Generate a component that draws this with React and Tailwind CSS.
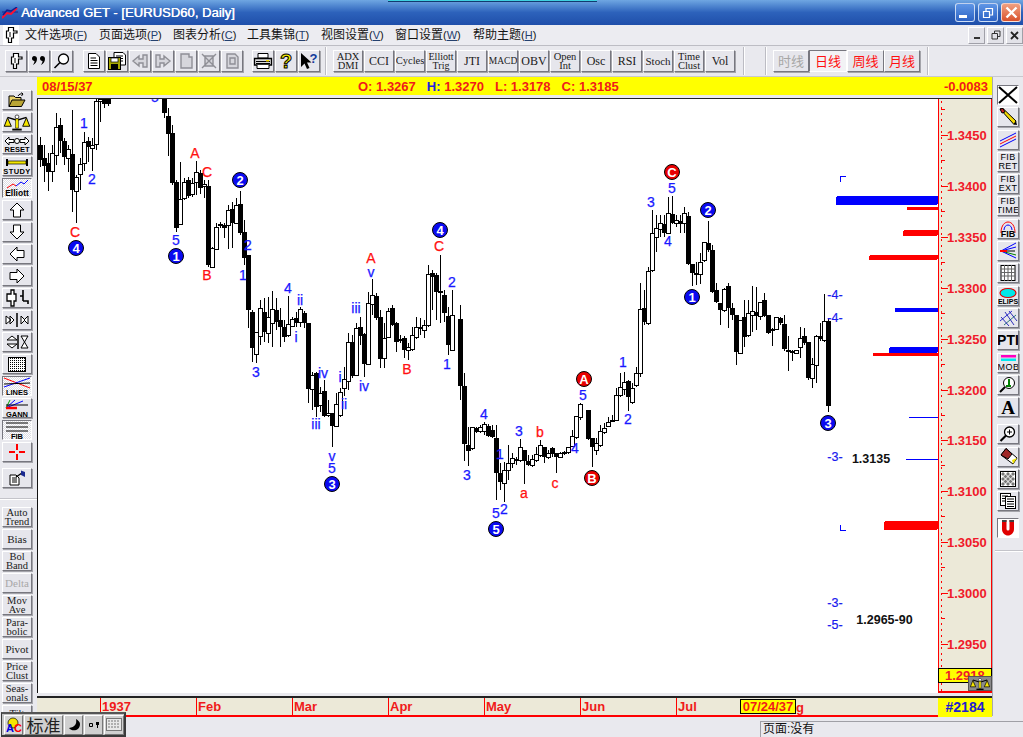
import React from "react";

const num = (x0, y0, list) =>
  list.map(([z, hi, top, bot, lo, f]) => {
    const raw = x0 + z / 3;
    const x = 40 + 4 * Math.round((raw - 40) / 4);
    return { x, hi: y0 + hi / 3, top: y0 + top / 3, bot: y0 + bot / 3, lo: y0 + lo / 3, f };
  });

const candles = [
  ...num(38, 95, [
    [6,125,150,195,215,1],[18,150,190,212,262,1],[30,175,205,232,288,1],[42,150,175,230,262,0],
    [54,55,95,180,210,0],[66,70,90,138,175,1],[78,130,138,185,210,1],[90,150,162,188,230,0],
    [102,45,178,285,350,1],[114,240,245,287,385,0],[126,190,208,238,285,0],[138,110,142,205,228,0],
    [150,125,138,155,200,1],[162,130,150,158,228,0],[174,10,18,148,165,0],[186,10,12,18,80,0],
    [198,0,0,28,40,1],[210,0,0,28,32,1],
    [378,0,5,55,70,1],[390,40,63,118,182,1],[402,90,115,265,270,1],[414,255,262,398,410,1],
    [426,200,312,388,390,0],[438,250,262,310,315,0],[450,245,255,302,310,1],[462,250,265,298,305,0],
    [474,198,232,262,300,0],[486,225,235,280,298,1],[498,255,268,275,310,0],[510,255,272,510,515,1],
    [522,455,458,515,518,0],[534,385,397,462,465,0],[546,380,388,392,400,1],[558,385,390,398,430,1],
    [570,330,346,390,462,0],[582,320,342,385,460,1],[594,310,330,385,388,0],[606,288,328,415,420,1],
    [618,375,412,488,510,1],
  ]),
  ...num(240, 220, [
    [24,105,105,270,325,1],[37,270,277,385,425,1],[49,335,335,400,430,0],[61,240,265,350,375,0],
    [73,235,277,335,365,1],[85,232,292,340,370,0],[97,212,268,310,380,0],[109,235,270,305,330,1],
    [121,265,300,322,380,1],[133,300,320,350,365,1],[145,228,313,347,352,0],[157,290,298,320,322,0],
    [169,275,295,310,320,1],[181,262,268,308,320,0],[193,272,278,308,325,1],[205,310,310,508,550,1],
    [217,455,465,507,570,0],[229,455,458,562,590,1],[241,500,518,555,575,0],[253,480,514,588,590,1],
    [265,540,578,585,590,0],[277,580,580,618,680,1],[289,520,553,620,622,0],[301,505,515,585,590,0],
    [313,440,478,505,528,0],[325,340,365,482,510,0],[337,345,367,467,475,1],[349,310,325,465,468,0],
    [361,290,322,347,375,1],[373,340,342,432,470,1],[385,215,250,434,436,0],[397,178,224,252,285,0],
    [409,220,228,295,300,1],[421,270,292,418,445,1],[433,310,355,415,445,0],[445,265,273,350,355,0],
    [457,255,265,314,318,1],[469,305,310,367,395,1],[481,345,358,362,370,0],[493,348,355,390,415,1],
    [505,368,382,390,420,0],[517,320,346,388,392,0],[529,290,320,350,358,0],[541,295,322,328,345,1],
    [553,300,314,328,355,0],[565,135,162,315,320,0],[577,150,158,170,270,1],[589,160,165,215,300,1],
    [601,105,212,218,308,1],[613,210,225,278,305,1],[625,260,287,375,405,1],[637,210,285,390,392,0],
    [661,255,297,497,540,1],[673,460,497,672,722,1],[685,620,675,692,738,1],[697,620,622,685,690,0],
    [709,622,625,635,640,1],[721,615,622,635,640,0],[733,605,613,635,645,0],[745,612,618,648,652,1],
    [757,615,630,652,655,1],[769,615,655,760,840,1],
  ]),
  ...num(440, 340, [
    [181,370,398,425,450,1],[193,365,390,428,485,0],[205,315,368,390,420,0],[217,340,355,370,385,0],
    [229,350,358,362,375,1],[241,298,322,360,365,0],[253,330,330,362,432,1],[265,345,362,375,378,1],
    [277,345,358,376,380,0],[289,320,343,360,365,0],[301,300,315,345,350,0],[313,320,322,350,370,1],
    [325,330,340,352,358,0],[337,322,325,342,350,1],[349,338,340,352,400,1],[361,335,338,350,352,0],
    [373,332,335,338,345,0],[385,320,322,338,342,0],[397,270,287,317,320,0],[409,228,228,292,296,0],
    [421,190,192,232,240,0],[445,210,210,298,300,1],[457,295,295,320,380,1],[469,295,310,332,345,0],
    [481,255,273,315,320,0],[493,250,265,278,282,0],[505,230,247,260,262,0],[517,225,240,242,245,0],
    [529,145,165,240,243,0],[541,100,142,165,170,0],[553,95,125,145,165,0],[565,120,122,172,212,1],
    [577,130,145,188,192,0],
  ]),
  ...num(620, 150, [
    [48,650,668,705,710,0],[60,400,478,670,680,0],[72,420,475,515,525,1],[84,350,363,520,525,0],
    [96,180,250,362,365,0],[108,195,235,262,305,0],[120,195,220,238,262,0],[132,195,223,250,260,1],
    [144,140,190,250,252,0],[156,138,192,218,222,1],[168,195,210,220,232,0],[180,195,212,222,250,1],
    [192,172,190,220,250,0],[204,185,198,342,345,1],[216,345,342,370,408,1],[228,335,368,370,405,1],
    [240,308,335,370,402,0],[252,275,277,332,335,0],[264,212,280,300,305,1],[276,285,300,425,430,1],
    [288,400,420,455,460,1],[300,458,460,480,525,1],[312,415,418,480,485,0],[324,400,408,475,535,1],
    [336,460,475,495,510,1],[348,510,495,605,645,1],[360,510,510,608,610,0],[372,450,502,560,590,1],
    [384,450,490,557,560,0],[396,408,483,495,545,0],[408,410,487,498,540,1],[420,455,455,498,510,0],
    [432,430,450,498,500,1],[444,495,495,548,552,1],[456,535,537,540,588,0],[468,500,502,538,540,0],
    [480,500,505,520,525,1],[492,495,523,598,602,1],[504,558,600,602,662,0],[516,600,603,610,632,1],
    [528,600,600,608,612,0],[540,530,565,592,625,0],[552,535,558,580,585,1],[564,575,577,683,690,1],
    [576,625,643,685,715,0],[588,555,557,645,700,0],[600,520,558,568,572,1],[612,432,512,568,575,0],
    [624,505,513,768,785,1],
  ]),
];

const BLUE = "#1818ff";
const RED = "#ff1010";
const labels = [
  ["5",155,97,BLUE],["1",84,123,BLUE],["2",92,179,BLUE],["C",75,232,RED],["A",195,153,RED],["C",207,172,RED],["5",176,240,BLUE],
  ["B",207,275,RED],["2",248,245,BLUE],["1",243,275,BLUE],["4",288,288,BLUE],["ii",300,300,BLUE],["i",296,337,BLUE],
  ["3",256,372,BLUE],["iv",323,373,BLUE],["iii",316,424,BLUE],["i",340,377,BLUE],["ii",344,404,BLUE],["iii",356,308,BLUE],
  ["iv",364,386,BLUE],["A",371,258,RED],["v",371,272,BLUE],["C",439,246,RED],["2",452,282,BLUE],["1",447,364,BLUE],
  ["B",407,369,RED],["v",332,456,BLUE],["5",332,468,BLUE],["3",467,475,BLUE],["4",484,414,BLUE],["1",500,454,BLUE],
  ["3",519,431,BLUE],["a",524,493,RED],["b",540,432,RED],["c",555,483,RED],["5",496,513,BLUE],["2",504,509,BLUE],
  ["4",575,448,BLUE],["5",583,395,BLUE],["1",623,362,BLUE],["2",628,419,BLUE],["5",672,188,BLUE],["3",651,202,BLUE],
  ["4",668,241,BLUE],
];
const circles = [
  ["4",76,248,0],["2",240,180,0],["1",176,256,0],["4",440,230,0],["3",332,484,0],["5",496,529,0],["A",584,379,1],
  ["B",592,478,1],["C",672,172,1],["2",708,210,0],["1",692,297,0],["3",828,423,0],
];
const bars = [
  [836,196,102,9,"#0000ff"],[907,207,31,3,"#ff0000"],[903,230,35,6,"#ff0000"],[869,255,69,5,"#ff0000"],
  [895,308,43,4,"#0000ff"],[889,347,49,6,"#0000ff"],[873,353,65,3,"#ff0000"],[884,521,54,9,"#ff0000"],
];

function Chart() {
  return (
    <svg viewBox="38 99 900 594" className="w-[900px] h-[594px] block" shapeRendering="crispEdges">
      {candles.map((c, i) => (
        <g key={i}>
          <rect x={c.x} y={c.hi} width="1" height={Math.max(c.lo - c.hi, 1)} fill="#000" />
          {c.f ? (
            <rect x={c.x - 2} y={c.top} width="5" height={Math.max(c.bot - c.top, 2)} fill="#000" />
          ) : (
            <rect x={c.x - 1.5} y={Math.round(c.top) + 0.5} width="4" height={Math.max(Math.round(c.bot - c.top), 1)} fill="#fff" stroke="#000" strokeWidth="1" />
          )}
        </g>
      ))}
      {bars.map(([x, y, w, h, col], i) => (
        <rect key={i} x={x} y={y} width={w} height={h} rx={h > 4 ? 2 : 1} fill={col} />
      ))}
      <path d="M840.5 182V176.5H846M840.5 525V530.5H846" fill="none" stroke="#0000ff" />
      <rect x="909" y="417" width="29" height="1" fill="#0000ff" />
      <rect x="906" y="459" width="32" height="1" fill="#0000ff" />
      <g fontFamily="'Liberation Sans',sans-serif" fontSize="14" textAnchor="middle" dominantBaseline="central" shapeRendering="auto">
        {labels.map(([t, x, y, col], i) => (
          <text key={i} x={x} y={y} fill={col} stroke={col} strokeWidth="0.25">{t}</text>
        ))}
        {circles.map(([t, x, y, r], i) => (
          <g key={i}>
            <circle cx={x} cy={y} r="7.5" fill={r ? "#e80000" : "#0a0af0"} stroke="#000" strokeWidth="1" />
            <text x={x} y={y + 0.5} fill="#fff" fontWeight="700" fontSize="13">{t}</text>
          </g>
        ))}
        {[["-4-",835,295],["-4-",835,318],["-3-",835,457],["-3-",835,603],["-5-",835,625]].map(([t, x, y], i) => (
          <text key={i} x={x} y={y} fill="#1818ee" fontSize="12.5" stroke="#1818ee" strokeWidth="0.2">{t}</text>
        ))}
        <text x="871" y="459" fill="#111" fontWeight="700" fontSize="12.5">1.3135</text>
        <text x="884.5" y="620" fill="#111" fontWeight="700" fontSize="12.5">1.2965-90</text>
      </g>
    </svg>
  );
}

const ticks = [
  ["1.3450",135],["1.3400",186],["1.3350",237],["1.3300",288],["1.3250",339],["1.3200",390],
  ["1.3150",440],["1.3100",491],["1.3050",542],["1.3000",593],["1.2950",644],
];

function Scale({ w = 20, h = 14 }) {
  return (
    <svg width={w} height={h} viewBox="0 0 28 18">
      <path d="M4 3.5L14 6.5L24 3.5" stroke="#000" strokeWidth="1.5" fill="none" />
      <path d="M4 4L0.5 13H8ZM24 4L20 13H27.5Z" fill="#f5e500" stroke="#000" />
      <path d="M12.5 5H15.5V15H12.5Z" fill="#fff200" stroke="#000" strokeWidth="0.6" />
      <path d="M9 16.5H19" stroke="#000" strokeWidth="2" />
      <circle cx="14" cy="3" r="2" fill="#fff" stroke="#000" strokeWidth="0.7" />
    </svg>
  );
}

function Axis() {
  return (
    <div className="relative w-[54px] h-[594px] bg-[#ece9d8] border-l border-r border-[#ff0000] border-b-2 border-b-[#ff0000]">
      <svg viewBox="938 99 54 594" className="absolute left-[-1px] top-0 w-[54px] h-[594px]" shapeRendering="crispEdges">
        {Array.from({ length: 100 }).map((_, i) => (
          <rect key={i} x="941" y={101 + i * 6} width="1" height="2" fill="#ff0000" />
        ))}
        {ticks.map(([t, y]) => (
          <g key={t}>
            <rect x="941" y={y} width="7" height="1" fill="#ff0000" />
            <rect x="941" y={y + 25} width="4" height="1" fill="#ff0000" />
          </g>
        ))}
        <rect x="941" y="109" width="4" height="1" fill="#ff0000" />
        <g shapeRendering="auto" fontFamily="'Liberation Sans',sans-serif" fontSize="13" fontWeight="700" fill="#f01a2a" dominantBaseline="central">
          {ticks.map(([t, y]) => (
            <text key={t} x="947" y={y + 0.5}>{t}</text>
          ))}
        </g>
      </svg>
      <div className="absolute left-[-1px] right-[-1px] top-[569px] h-[15px] bg-[#ffff00] border border-black text-[#f01a2a] text-[13px] font-bold leading-[13px] pl-[6px] overflow-hidden font-['Liberation_Sans',sans-serif]">
        1.2918
      </div>
      <div className="absolute right-[-1px] top-[577px] w-[24px] h-[15px] bg-[#8a8a8a] border border-[#555] flex items-center justify-center">
        <Scale />
      </div>
    </div>
  );
}

const raised = "border border-t-white border-l-white border-r-[#77777f] border-b-[#77777f] shadow-[1px_1px_0_#a4a4aa] bg-[#e6e6ec]";
const pressed = "border border-t-[#77777f] border-l-[#77777f] border-r-white border-b-white bg-[#f2f2f5]";
const textBtn = "font-['Liberation_Serif',serif] text-[#1a1a1a] text-center";

function Btn({ w = 22, h = 20, on, className = "", children }) {
  return (
    <div
      className={`${on ? pressed : raised} flex items-center justify-center shrink-0 overflow-hidden ${className}`}
      style={{ width: w, height: h }}
    >
      {children}
    </div>
  );
}

const s = { fill: "none", stroke: "#000", strokeWidth: 1 };
const Svg = ({ w = 20, h = 18, vb, children }) => (
  <svg width={w} height={h} viewBox={vb || `0 0 ${w} ${h}`} className="block">{children}</svg>
);

const CandleIcon = ({ light }) => (
  <Svg w={16} h={18}>
    <path d="M8.5 1.5H5.5V5H3.5V12H5.5V16.5H8.5V12H10.5V7H14V5H10.5V1.5Z" fill="#fff" stroke="#000" strokeWidth="1.2" />
    <path d="M7 6V11" stroke={light ? "#999" : "#000"} />
  </Svg>
);
const QuoteIcon = () => (
  <Svg w={16} h={14}>
    <path d="M3 2C5 2 6 3 6 5C6 8 4 10 2 11C3 9 3.5 8 3.5 7C2 7 1 6 1 4.5C1 3 2 2 3 2ZM11 2C13 2 14 3 14 5C14 8 12 10 10 11C11 9 11.5 8 11.5 7C10 7 9 6 9 4.5C9 3 10 2 11 2Z" fill="#000" />
  </Svg>
);
const Magnifier = ({ plus }) => (
  <Svg w={18} h={18}>
    <circle cx="10.5" cy="7" r="5" fill="#fff" stroke="#000" strokeWidth="1.3" />
    <path d="M7 10.5L1.5 16" stroke="#000" strokeWidth={plus ? 2.2 : 1.6} />
    {plus && <path d="M8 7H13M10.5 4.5V9.5" stroke="#000" />}
  </Svg>
);
const Doc = () => (
  <Svg w={14} h={16}>
    <path d="M1.5 0.5H9L12.5 4V15.5H1.5Z" fill="#fff" stroke="#000" />
    <path d="M3.5 5H9M3.5 7.5H10.5M3.5 10H10.5M3.5 12.5H10.5" stroke="#000" />
  </Svg>
);
const Save = () => (
  <Svg w={18} h={18}>
    <path d="M6 0.5H15L17.5 3V13H6Z" fill="#fff" stroke="#000" />
    <path d="M8 4H15M8 6.5H15M8 9H15" stroke="#000" />
    <rect x="0.5" y="5.5" width="12" height="12" fill="#a8a800" stroke="#000" />
    <rect x="3" y="6" width="7" height="4" fill="#fff" stroke="#000" strokeWidth="0.7" />
    <rect x="3" y="12" width="7" height="5" fill="#000" />
  </Svg>
);
const GrayShape = ({ d }) => (
  <Svg w={18} h={16}>
    <path d={d} fill="#d6d6dc" stroke="#8f8f96" strokeWidth="1.4" />
  </Svg>
);
const Printer = () => (
  <Svg w={20} h={18}>
    <path d="M5 1.5H15V6H5Z" fill="#fff" stroke="#000" />
    <path d="M1.5 6.5H18.5V13H1.5Z" fill="#d9d9d9" stroke="#000" strokeWidth="1.3" />
    <path d="M3 9.5H17M3 11.5H17" stroke="#000" />
    <path d="M4 13V16.5H16V13" fill="#fff" stroke="#000" />
    <rect x="13" y="8" width="3" height="1.5" fill="#ffe000" />
  </Svg>
);
const Help = () => (
  <span className="font-['Liberation_Sans',sans-serif] font-bold text-[20px] leading-none text-[#f5ea00] [-webkit-text-stroke:1px_#000]">?</span>
);
const HelpArrow = () => (
  <Svg w={20} h={18}>
    <path d="M2 1V15L5.5 11.5L8 17L10.5 16L8 10.5H12.5Z" fill="#000" />
    <text x="10.5" y="11" fontFamily="'Liberation Sans',sans-serif" fontWeight="700" fontSize="13" fill="#123a9c">?</text>
  </Svg>
);

const FolderI = () => (
  <Svg w={18} h={16}>
    <path d="M1 4H6L7.5 5.5H13V14.5H1Z" fill="#e9d36a" stroke="#000" />
    <path d="M1 14.5L4 8H17L13.5 14.5Z" fill="#b9a534" stroke="#000" />
    <path d="M10 4C11 2 13 1.5 15 2L13.5 0.5M15 2L13.5 4" stroke="#000" fill="none" />
  </Svg>
);
const ResetI = () => (
  <Svg w={28} h={18}>
    <path d="M2 6L6 2V4.5H11V7.5H6V10ZM26 6L22 2V4.5H17V7.5H22V10Z" fill="#fff" stroke="#000" />
    <circle cx="14" cy="6" r="2.5" fill="#fff" stroke="#000" />
    <text x="14" y="17" textAnchor="middle" fontFamily="'Liberation Sans',sans-serif" fontWeight="700" fontSize="7.5">RESET</text>
  </Svg>
);
const StudyI = () => (
  <Svg w={28} h={18}>
    <path d="M4 2V9M24 2V9" stroke="#000" strokeWidth="2" />
    <rect x="5" y="4" width="18" height="3" fill="#f3e600" stroke="#000" strokeWidth="0.7" />
    <text x="14" y="17" textAnchor="middle" fontFamily="'Liberation Sans',sans-serif" fontWeight="700" fontSize="7.5" letterSpacing="0.4">STUDY</text>
  </Svg>
);
const ElliottI = () => (
  <Svg w={28} h={18}>
    <path d="M4 9L10 5L13 7" stroke="#ff0000" fill="none" />
    <path d="M13 7L18 3L21 5L25 1" stroke="#0000ff" fill="none" />
    <text x="14" y="17" textAnchor="middle" fontFamily="'Liberation Sans',sans-serif" fontWeight="700" fontSize="8.5">Elliott</text>
  </Svg>
);
const Arrow = ({ dir }) => {
  const rot = { up: 0, down: 180, left: 270, right: 90 }[dir];
  return (
    <Svg w={18} h={16}>
      <path transform={`rotate(${rot} 9 8)`} d="M9 1L16 8H12.5V15H5.5V8H2Z" fill="#fff" stroke="#000" />
    </Svg>
  );
};
const TwoCandles = () => (
  <Svg w={26} h={18}>
    <path d="M7 1H10V5H12V12H10V17H7V12H3V5H7Z" fill="#fff" stroke="#000" strokeWidth="1.3" />
    <path d="M19 1V12M19 7H16M19 12H24V15" stroke="#000" strokeWidth="1.6" fill="none" />
  </Svg>
);
const HBars = () => (
  <Svg w={26} h={16}>
    <path d="M7 8L2 4V12ZM10 8L6 4V12Z" fill="#fff" stroke="#000" />
    <path d="M13 1V15" stroke="#000" strokeWidth="1.5" />
    <path d="M17 4L21 8L17 12ZM24 4L20 8L24 12Z" fill="#fff" stroke="#000" />
  </Svg>
);
const VBars = () => (
  <Svg w={26} h={16}>
    <path d="M3 6L8 2L13 6ZM3 10L8 14L13 10Z" fill="#fff" stroke="#000" />
    <path d="M14 1V15" stroke="#000" strokeWidth="1.5" />
    <path d="M17 2H24L20.5 8L24 14H17L20.5 8Z" fill="#fff" stroke="#000" />
  </Svg>
);
const Dots = () => (
  <Svg w={18} h={15}>
    <rect width="18" height="15" fill="#fff" />
    {Array.from({ length: 7 }).map((_, r) =>
      Array.from({ length: 9 }).map((_, c) => (
        <rect key={`${r}-${c}`} x={c * 2} y={r * 2 + 1} width="1" height="1" fill="#000" />
      ))
    )}
    <rect x="0.5" y="0.5" width="17" height="14" fill="none" stroke="#000" />
  </Svg>
);
const LinesI = () => (
  <Svg w={28} h={18}>
    <path d="M1 1L27 11" stroke="#ff0000" />
    <path d="M1 10L27 1" stroke="#0000ff" />
    <path d="M1 7L27 6" stroke="#000" />
    <text x="14" y="17.5" textAnchor="middle" fontFamily="'Liberation Sans',sans-serif" fontWeight="700" fontSize="7.5">LINES</text>
  </Svg>
);
const GannI = () => (
  <Svg w={28} h={18}>
    <path d="M3 9L12 1M3 9L20 2" stroke="#0000ff" />
    <path d="M3 9L7 1" stroke="#00a000" />
    <path d="M3 9L14 9" stroke="#ff0000" strokeWidth="2.5" />
    <path d="M3 6L25 6" stroke="#000" />
    <text x="14" y="17.5" textAnchor="middle" fontFamily="'Liberation Sans',sans-serif" fontWeight="700" fontSize="7.5">GANN</text>
  </Svg>
);
const FibI = () => (
  <Svg w={28} h={18}>
    <path d="M3 2H25M3 6H25M3 10H25" stroke="#000" />
    <text x="14" y="17.5" textAnchor="middle" fontFamily="'Liberation Sans',sans-serif" fontWeight="700" fontSize="7.5">FIB</text>
  </Svg>
);
const Cross = () => (
  <Svg w={16} h={16}>
    <path d="M8 0V6M8 10V16M0 8H6M10 8H16" stroke="#ff0000" strokeWidth="2" />
  </Svg>
);
const ClipI = () => (
  <Svg w={18} h={16}>
    <path d="M2 5H8L11 8V15H2Z" fill="#fff" stroke="#000" />
    <path d="M4 8H9M4 10H9M4 12H9" stroke="#000" />
    <path d="M8 7L14 3" stroke="#000" strokeWidth="1.3" />
    <path d="M13 0.5L17 2V7L13 5Z" fill="#1a2a90" />
  </Svg>
);
const Pencil = () => (
  <Svg w={20} h={18}>
    <path d="M2 1L5 0.5L18 13L16 16.5Z" fill="#f3d800" stroke="#000" />
    <path d="M16 16.5L19 17L18 13Z" fill="#000" />
    <path d="M2 1L5 0.5L7 4L4 5Z" fill="#d02020" stroke="#000" />
  </Svg>
);
const TriLines = () => (
  <Svg w={20} h={18}>
    <path d="M2 10L18 2" stroke="#0000ff" />
    <path d="M2 13L18 5" stroke="#ff0000" />
    <path d="M2 16L18 8" stroke="#0000ff" />
  </Svg>
);
const FibTxt = ({ a, b }) => (
  <div className="font-['Liberation_Sans',sans-serif] text-[9px] leading-[9px] tracking-[0.4px] text-center text-black">
    {a}<br />{b}
  </div>
);
const FibArc = () => (
  <Svg w={20} h={18}>
    <path d="M3 13C3 5 7 2 10 2C14 2 17 6 17 13" stroke="#ff0000" fill="none" />
    <path d="M6 10C6 7 8 5 10 5C12 5 14 7 14 10" stroke="#0000ff" fill="none" />
    <text x="10" y="17" textAnchor="middle" fontFamily="'Liberation Sans',sans-serif" fontWeight="700" fontSize="9">FIB</text>
  </Svg>
);
const Fan = () => (
  <Svg w={20} h={18}>
    <path d="M3 9L18 1M3 9L18 5" stroke="#0000ff" />
    <path d="M3 9L17 9" stroke="#000" />
    <path d="M3 9L18 13" stroke="#008000" />
    <path d="M3 9L18 16" stroke="#0000ff" />
    <path d="M2 9H9" stroke="#ff0000" strokeWidth="2" />
  </Svg>
);
const Grid = () => (
  <Svg w={18} h={16}>
    <rect x="2" y="0.5" width="14" height="15" fill="#fff" stroke="#000" />
    <path d="M2 4H16M2 7.5H16M2 11H16M5.5 0V16M9 0V16M12.5 0V16" stroke="#666" />
  </Svg>
);
const Elips = () => (
  <Svg w={20} h={18}>
    <ellipse cx="10" cy="6" rx="8" ry="4.5" fill="#00e8e8" stroke="#e00000" strokeWidth="1.2" />
    <text x="10" y="17" textAnchor="middle" fontFamily="'Liberation Sans',sans-serif" fontWeight="700" fontSize="7">ELIPS</text>
  </Svg>
);
const Diag = () => (
  <Svg w={20} h={18}>
    <path d="M2 12L14 2" stroke="#0000cc" strokeWidth="0.8" />
    <path d="M6 16L18 6" stroke="#006060" strokeWidth="0.8" />
    <path d="M7 3L16 16M11 2L19 12M3 8L11 17" stroke="#0000aa" strokeWidth="0.8" />
  </Svg>
);
const Mob = () => (
  <Svg w={20} h={18}>
    <rect x="3" y="1" width="15" height="2.5" fill="#ff00c0" />
    <rect x="3" y="4.5" width="15" height="2.5" fill="#00e8f0" />
    <text x="10.5" y="16" textAnchor="middle" fontFamily="'Liberation Sans',sans-serif" fontSize="9" letterSpacing="0.5">MOB</text>
  </Svg>
);
const Tool = () => (
  <Svg w={18} h={18}>
    <circle cx="10" cy="7" r="5.5" fill="#fff" stroke="#000" />
    <path d="M6 11L1 16" stroke="#000" strokeWidth="2" />
    <path d="M10 3V10M7 10H12" stroke="#008000" strokeWidth="2" />
  </Svg>
);
const Eraser = () => (
  <Svg w={20} h={18}>
    <path d="M8 0.5L19 10L15 16L3 7Z" fill="#fff" stroke="#000" />
    <path d="M8 0.5L14 6L10 11L3 7Z" fill="#a02828" stroke="#000" />
    <path d="M14 12L19 10L15 16Z" fill="#f3e600" />
  </Svg>
);
const Sparse = () => (
  <Svg w={16} h={16}>
    <rect x="0.5" y="0.5" width="15" height="15" fill="#fff" stroke="#000" />
    {[[3,3],[8,3],[13,3],[5.5,5.5],[10.5,5.5],[3,8],[8,8],[13,8],[5.5,10.5],[10.5,10.5],[3,13],[8,13],[13,13]].map(([x, y]) => (
      <path key={`${x}-${y}`} d={`M${x} ${y - 2}L${x + 2} ${y}L${x} ${y + 2}L${x - 2} ${y}Z`} fill="#777" />
    ))}
  </Svg>
);
const PagesI = () => (
  <Svg w={18} h={16}>
    <rect x="1.5" y="0.5" width="10" height="12" fill="#fff" stroke="#000" />
    <rect x="6.5" y="3.5" width="10" height="12" fill="#fff" stroke="#000" />
    <path d="M3 3H9M3 5.5H6M3 8H6M8 6H15M8 8.5H15M8 11H15M8 13.5H15" stroke="#000" />
  </Svg>
);
const Magnet = () => (
  <Svg w={18} h={18}>
    <path d="M3 1H7.5V10A1.5 1.5 0 0 0 10.5 10V1H15V10C15 14 12 16.5 9 16.5C6 16.5 3 14 3 10Z" fill="#e00000" />
    <path d="M3 1H7.5V3H3ZM10.5 1H15V3H10.5Z" fill="#404040" />
  </Svg>
);
const BigX = () => (
  <Svg w={20} h={18}>
    <path d="M1 1L19 17M19 1L1 17" stroke="#000" strokeWidth="2" />
  </Svg>
);

const Two = ({ a, b, size = "text-[10.5px]" }) => (
  <div className={`${textBtn} ${size} leading-[9px]`}>
    {a}
    <br />
    {b}
  </div>
);
const One = ({ t, size = "text-[12px]", muted }) => (
  <div className={`${textBtn} ${size} ${muted ? "text-[#a8a8a8]" : ""}`}>{t}</div>
);

function TitleBar() {
  const WinBtn = ({ red, children }) => (
    <div className={`w-[20px] h-[19px] rounded-[3px] border border-white/70 flex items-center justify-center ${red ? "bg-gradient-to-b from-[#f0a080] to-[#d8502a]" : "bg-gradient-to-b from-[#5f96e6] to-[#2c62c4]"}`}>
      {children}
    </div>
  );
  return (
    <div className="h-[25px] shrink-0 relative flex items-center bg-gradient-to-b from-[#6fa6e2] via-[#2d62bb] to-[#1f4faa] pl-[2px] pr-[2px]">
      <svg width="16" height="12" viewBox="0 0 16 12" className="mr-[3px] shrink-0">
        <path d="M0 5H16" stroke="#1a2a8a" strokeWidth="1" />
        <path d="M0 11L5 6L9 7L15 1" stroke="#ff1030" strokeWidth="2" fill="none" />
        <path d="M1 8L5 3L9 4L15 0" stroke="#102090" strokeWidth="1.5" fill="none" />
      </svg>
      <span className="text-white font-['Liberation_Sans',sans-serif] text-[13px] tracking-[0.05px] [text-shadow:0.4px_0_0_#fff]">
        Advanced GET - [EURUSD60, Daily]
      </span>
      <div className="absolute left-[388px] top-0 w-[209px] h-[2px] bg-[#3fd0e0] border-b border-[#123a70]" />
      <div className="ml-auto flex gap-[3px]">
        <WinBtn><div className="w-[8px] h-[3px] bg-white mt-[8px] mr-[4px]" /></WinBtn>
        <WinBtn>
          <svg width="12" height="12" viewBox="0 0 12 12"><path d="M1.5 4.5H7.5V10.5H1.5ZM4 4V1.5H10.5V8H8" stroke="#fff" fill="none" strokeWidth="1.2" /></svg>
        </WinBtn>
        <WinBtn red>
          <svg width="13" height="13" viewBox="0 0 13 13"><path d="M1.5 1.5L11.5 11.5M11.5 1.5L1.5 11.5" stroke="#fff" strokeWidth="2.4" /></svg>
        </WinBtn>
      </div>
    </div>
  );
}

function MenuBar() {
  const items = [
    ["文件选项", "F"], ["页面选项", "P"], ["图表分析", "C"], ["工具集锦", "T"],
    ["视图设置", "V"], ["窗口设置", "W"], ["帮助主题", "H"],
  ];
  return (
    <div className="h-[21px] shrink-0 flex items-center bg-[#ececf1] border-b border-[#bdbdc4] pl-[3px] pr-0 text-[12px] text-[#151515] font-['Liberation_Sans','Noto_Sans_CJK_SC',sans-serif]">
      <div className="w-[16px] h-[20px] bg-white flex items-center justify-center mr-[6px]"><CandleIcon /></div>
      <div className="flex">
        {items.map(([t, k]) => (
          <span key={k} className="w-[74px] whitespace-nowrap last:w-auto data-[w=1]:w-[78px]" data-w={k === "W" ? 1 : 0}>
            {t}<span className="text-[11px]">(<span className="underline text-[#24406e]">{k}</span>)</span>
          </span>
        ))}
      </div>
      <div className="ml-auto flex gap-[2px] items-center">
        {["min", "max", "x"].map((k) => (
          <div key={k} className="w-[17px] h-[17px] bg-[#e2e2e8] border border-t-white border-l-white border-r-[#a0a0a8] border-b-[#a0a0a8] flex items-center justify-center">
            {k === "min" && <div className="w-[6px] h-[2px] bg-[#333] mt-[6px]" />}
            {k === "max" && <svg width="10" height="10" viewBox="0 0 10 10"><path d="M1 3.5H6.5V9H1ZM3.5 3V1H9V6.5H7" {...s} stroke="#333" /></svg>}
            {k === "x" && <svg width="9" height="9" viewBox="0 0 9 9"><path d="M1 1L8 8M8 1L1 8" stroke="#222" strokeWidth="1.8" /></svg>}
          </div>
        ))}
      </div>
    </div>
  );
}

const Sep = ({ className = "" }) => <div className={`w-[2px] h-[28px] border-l border-[#bcbcc3] border-r-white border-r ${className}`} />;

function Toolbar() {
  const textButtons = [
    <Two a="ADX" b="DMI" />, <One t="CCI" />, <One t="Cycles" size="text-[10.5px]" />, <Two a="Elliott" b="Trig" size="text-[10px]" />,
    <One t="JTI" />, <One t="MACD" size="text-[9.5px]" />, <One t="OBV" />, <Two a="Open" b="Int" />,
    <One t="Osc" />, <One t="RSI" />, <One t="Stoch" size="text-[11px]" />, <Two a="Time" b="Clust" />, <One t="Vol" />,
  ];
  const disabled = [
    "M2 8L8 3V6H12V2H16V14H12V10H8V13Z",
    "M16 8L10 3V6H6V2H2V14H6V10H10V13Z",
    "M4 1H12V4H15V15H4Z",
    "M2 1L16 15M16 1L2 15M5 3H13V13H5Z",
    "M4 1H12L15 4V15H4ZM7 5H12V11H7Z",
  ];
  const CN = ({ t, w, on, muted }) => (
    <Btn w={w} h={22} on={on}>
      <span className={`text-[13px] ${muted ? "text-[#a6a6a6]" : "text-[#ff1010]"} font-['Noto_Sans_CJK_SC',sans-serif]`}>{t}</span>
    </Btn>
  );
  return (
    <div className="h-[31px] shrink-0 flex items-center bg-[#e9e9ee] border-b border-[#c8c8ce] pl-[5px]">
      <div className="flex gap-[1px]">
        <Btn h={22}><CandleIcon /></Btn>
        <Btn h={22}><QuoteIcon /></Btn>
        <Btn h={22}><Magnifier /></Btn>
      </div>
      <div className="flex gap-[1px] ml-[10px]">
        <Btn h={22}><Doc /></Btn>
        <Btn h={22}><Save /></Btn>
        {disabled.map((d) => (
          <Btn h={22} key={d}><GrayShape d={d} /></Btn>
        ))}
      </div>
      <div className="flex gap-[1px] ml-[9px]">
        <Btn h={22}><Printer /></Btn>
        <Btn h={22}><Help /></Btn>
        <Btn h={22}><HelpArrow /></Btn>
      </div>
      <Sep className="ml-[5px]" />
      <div className="flex gap-[1px] ml-[6px]">
        {textButtons.map((c, i) => (
          <Btn w={30} h={22} key={i}>{c}</Btn>
        ))}
      </div>
      <Sep className="ml-[8px]" />
      <Sep className="ml-[20px]" />
      <div className="flex ml-[6px]">
        <CN t="时线" w={36} muted />
        <CN t="日线" w={38} on />
        <CN t="周线" w={37} />
        <CN t="月线" w={36} />
      </div>
      <Sep className="ml-[7px]" />
    </div>
  );
}

function LeftBar() {
  const dither = "bg-[repeating-conic-gradient(#dcdce2_0_25%,#fff_0_50%)] bg-[length:2px_2px]";
  return (
    <div className="w-[37px] shrink-0 flex flex-col pl-[2px] pt-[13px] bg-[#e9e9ee] overflow-hidden">
      <div className="flex flex-col gap-[2px]">
        <Btn w={30}><FolderI /></Btn>
        <Btn w={30}><Scale w={28} h={17} /></Btn>
        <Btn w={30}><ResetI /></Btn>
        <Btn w={30}><StudyI /></Btn>
        <Btn w={30} on className={dither}><ElliottI /></Btn>
        <Btn w={30}><Arrow dir="up" /></Btn>
        <Btn w={30}><Arrow dir="down" /></Btn>
        <Btn w={30}><Arrow dir="left" /></Btn>
        <Btn w={30}><Arrow dir="right" /></Btn>
        <Btn w={30}><TwoCandles /></Btn>
        <Btn w={30}><HBars /></Btn>
        <Btn w={30}><VBars /></Btn>
        <Btn w={30}><Dots /></Btn>
        <Btn w={30} on className={dither}><LinesI /></Btn>
        <Btn w={30}><GannI /></Btn>
        <Btn w={30} on className={dither}><FibI /></Btn>
        <Btn w={30}><Cross /></Btn>
        <Btn w={30} className="mt-[4px]"><ClipI /></Btn>
      </div>
      <div className="h-[2px] -ml-[2px] mt-[10px] mb-[7px] border-t border-[#c4c4ca] border-b border-b-white shrink-0" />
      <div className="flex flex-col gap-[2px]">
        <Btn w={30}><Two a="Auto" b="Trend" /></Btn>
        <Btn w={30}><One t="Bias" size="text-[11px]" /></Btn>
        <Btn w={30}><Two a="Bol" b="Band" /></Btn>
        <Btn w={30}><One t="Delta" size="text-[11px]" muted /></Btn>
        <Btn w={30}><Two a="Mov" b="Ave" /></Btn>
        <Btn w={30}><Two a="Para-" b="bolic" /></Btn>
        <Btn w={30}><One t="Pivot" size="text-[11px]" /></Btn>
        <Btn w={30}><Two a="Price" b="Clust" /></Btn>
        <Btn w={30}><Two a="Seas-" b="onals" /></Btn>
        <Btn w={30} className="items-start"><One t="Tilt" size="text-[10.5px]" /></Btn>
      </div>
    </div>
  );
}

function RightBar() {
  return (
    <div className="flex-1 flex flex-col items-start pl-[4px] pt-[8px] bg-[#e9e9ee]">
      <div className="flex flex-col gap-[2.3px]">
        <Btn on className="bg-white"><BigX /></Btn>
        <Btn><Pencil /></Btn>
        <Btn><TriLines /></Btn>
        <Btn><FibTxt a="FIB" b="RET" /></Btn>
        <Btn><FibTxt a="FIB" b="EXT" /></Btn>
        <Btn><FibTxt a="FIB" b="TIME" /></Btn>
        <Btn><FibArc /></Btn>
        <Btn><Fan /></Btn>
        <Btn><Grid /></Btn>
        <Btn><Elips /></Btn>
        <Btn><Diag /></Btn>
        <Btn><span className="font-['Liberation_Sans',sans-serif] font-bold text-[14px] leading-none">PTI</span></Btn>
        <Btn><Mob /></Btn>
        <Btn><Tool /></Btn>
        <Btn><span className="font-['Liberation_Serif',serif] font-bold text-[19px] leading-none">A</span></Btn>
        <Btn className="mt-[5px]"><Magnifier plus /></Btn>
        <Btn><Eraser /></Btn>
        <Btn><Sparse /></Btn>
        <Btn><PagesI /></Btn>
        <Btn on className="mt-[4px] bg-white"><Magnet /></Btn>
      </div>
      <div className="h-[2px] -ml-[2px] w-[28px] mt-[12px] border-t border-[#c4c4ca] border-b border-b-white" />
    </div>
  );
}

function HeaderBar() {
  const f = "text-[#f01a1a]";
  return (
    <div className="h-[18px] w-[955px] shrink-0 bg-[#ffff00] flex items-center pl-[5px] pr-[4px] font-['Liberation_Sans',sans-serif] text-[13px] font-bold leading-none">
      <span className={`${f} w-[316px]`}>08/15/37</span>
      <div className="flex gap-[11px]">
        <span className={f}>O: 1.3267</span>
        <span><span className="text-[#2020e0]">H:</span> <span className={f}>1.3270</span></span>
        <span className={f}>L: 1.3178</span>
        <span className={f}>C: 1.3185</span>
      </div>
      <span className={`${f} ml-auto`}>-0.0083</span>
    </div>
  );
}

function DateBar() {
  const months = ["1937", "Feb", "Mar", "Apr", "May", "Jun", "Jul"];
  return (
    <div className="h-[21px] w-[955px] flex border-t-2 border-[#222] mt-[3px]">
      <div className="w-[901px] relative flex bg-[#ece9d8] border-b-2 border-[#ff0000] font-['Liberation_Sans',sans-serif] text-[13px] font-bold text-[#f01a1a] pl-[63px] leading-none">
        {months.map((m) => (
          <div key={m} className="w-[96px] h-full flex items-center border-l border-[#ff0000] pl-[1px]">
            {m}
          </div>
        ))}
        <span className="absolute left-[759px] top-[3px]">g</span>
        <div className="absolute left-[703px] top-[1px] w-[56px] h-[15px] bg-[#ffff00] border border-black flex items-center justify-center">07/24/37</div>
      </div>
      <div className="flex-1 bg-[#ffff00] flex items-center justify-center font-['Liberation_Sans',sans-serif] text-[14px] font-bold text-[#2020d0]">#2184</div>
    </div>
  );
}

function Ime() {
  return (
    <div className="absolute left-[1px] top-[712px] w-[125px] h-[25px] bg-[#c4c4c4] border-t-2 border-l border-r-2 border-b-2 border-[#3a3a3a] border-t-[#555] flex items-center gap-[1px] pl-[2px]">
      <div className="w-[19px] h-[20px] bg-[#d6d6d6] border border-t-white border-l-white border-r-[#777] border-b-[#777] flex items-center justify-center">
        <svg width="17" height="18" viewBox="0 0 17 18">
          <circle cx="8" cy="7" r="5" fill="#f5e500" stroke="#000" strokeWidth="0.7" />
          <text x="1" y="16" fontFamily="'Liberation Sans',sans-serif" fontWeight="700" fontSize="11" fill="#0000e0">A</text>
          <text x="9" y="16" fontFamily="'Liberation Sans',sans-serif" fontWeight="700" fontSize="11" fill="#ff0000">C</text>
        </svg>
      </div>
      <div className="w-[39px] h-[20px] bg-[#d0d0d0] border border-t-white border-l-white border-r-[#777] border-b-[#777] flex items-center justify-center text-[17px] leading-none text-[#222] font-['Noto_Sans_CJK_SC',sans-serif]">标准</div>
      <div className="w-[19px] h-[20px] bg-[#d0d0d0] border border-t-white border-l-white border-r-[#777] border-b-[#777] flex items-center justify-center">
        <svg width="14" height="14" viewBox="0 0 14 14"><path d="M9 1C10 6 8 9 2 10C5 14 13 13 13 6C13 4 11 2 9 1Z" fill="#000" /></svg>
      </div>
      <div className="w-[19px] h-[20px] bg-[#d0d0d0] border border-t-white border-l-white border-r-[#777] border-b-[#777] flex items-center justify-center">
        <svg width="12" height="8" viewBox="0 0 12 8"><path d="M1.5 2.5H4.5V5.5H1.5Z" fill="none" stroke="#000" /><path d="M8 1H11V4H10V7H9V4H8Z" fill="#000" /></svg>
      </div>
      <div className="w-[20px] h-[20px] bg-[#d0d0d0] border border-t-white border-l-white border-r-[#777] border-b-[#777] flex items-center justify-center">
        <svg width="16" height="13" viewBox="0 0 16 13"><rect x="0.5" y="0.5" width="15" height="12" fill="#e8e8e8" stroke="#777" /><path d="M2 3H14M2 6H14M2 9H14" stroke="#777" strokeDasharray="2 1" /></svg>
      </div>
    </div>
  );
}

export default function App() {
  return (
    <div className="relative w-[1023px] h-[737px] overflow-hidden flex flex-col bg-[#e9e9ee] font-['Liberation_Sans','Noto_Sans_CJK_SC',sans-serif]">
      <TitleBar />
      <MenuBar />
      <Toolbar />
      <div className="flex-1 min-h-0 flex">
        <LeftBar />
        <div className="w-[956px] shrink-0 flex flex-col pl-[1px] border-r border-[#a8a8ae]">
          <div className="-ml-[1px]"><HeaderBar /></div>
          <div className="flex mt-[3px] border-t-[1.5px] border-[#222] -ml-[1px] w-[955px]">
            <div className="w-[901px] bg-white border-l border-[#111]"><Chart /></div>
            <Axis />
          </div>
          <div className="-ml-[1px]"><DateBar /></div>
        </div>
        <RightBar />
      </div>
      <div className="h-[21px] shrink-0 flex justify-end items-end">
        <div className="w-[263px] h-[16px] border-t border-l border-[#a0a0a6] text-[12px] leading-[15px] pl-[2px] text-[#111]">页面:没有</div>
      </div>
      <Ime />
    </div>
  );
}
